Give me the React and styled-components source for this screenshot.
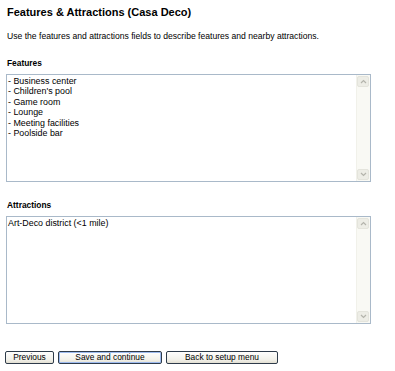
import React, { useState } from 'react';
import styled, { createGlobalStyle } from 'styled-components';

const GlobalStyle = createGlobalStyle`
  html, body {
    margin: 0;
    padding: 0;
    background: #ffffff;
  }
  body {
    font-family: "Liberation Sans", Arial, sans-serif;
    color: #000;
  }
`;

const Page = styled.div`
  width: 395px;
  height: 371px;
  box-sizing: border-box;
  padding: 5px 24px 0 6px;
  display: flex;
  flex-direction: column;
`;

const Title = styled.h1`
  margin: 0 0 0 1px;
  font-size: 11px;
  line-height: 14px;
  font-weight: 700;
`;

const Intro = styled.p`
  margin: 12px 0 0 1px;
  font-size: 8.6px;
  line-height: 11px;
`;

const Label = styled.div`
  margin: ${props => props.top}px 0 0 1px;
  font-size: 8.4px;
  line-height: 11px;
  font-weight: 700;
`;

const FieldBox = styled.div`
  margin-top: 5px;
  height: 108px;
  box-sizing: border-box;
  border: 1px solid #a9b9c9;
  display: flex;
  background: #fff;
`;

const Area = styled.textarea`
  flex: 1;
  border: none;
  outline: none;
  resize: none;
  margin: 0;
  padding: 1px 1px;
  font-family: "Liberation Sans", Arial, sans-serif;
  font-size: 8.9px;
  line-height: 10.4px;
  color: #000;
  background: transparent;
  overflow: hidden;
`;

const Scrollbar = styled.div`
  width: 12px;
  display: flex;
  flex-direction: column;
  justify-content: space-between;
  background: #f9f9f4;
  border-left: 1px solid #f1f1ea;
  padding: 1px 1px 1px 0;
`;

const ScrollButton = styled.div`
  height: 11px;
  border-radius: 2px;
  background: #ededE6;
  border: 1px solid #e4e4dc;
  box-sizing: border-box;
  display: flex;
  align-items: center;
  justify-content: center;
  svg {
    display: block;
  }
`;

const ButtonRow = styled.div`
  margin-top: 27px;
  margin-left: -1px;
  display: flex;
  gap: 4px;
`;

const Button = styled.button`
  width: ${props => props.w}px;
  height: 13px;
  margin: 0;
  padding: 0;
  box-sizing: border-box;
  border: 1px solid #2e3b4a;
  border-radius: 2px;
  background: linear-gradient(#fefefe, #f2f1ea 70%, #e2dfd2);
  font-family: "Liberation Sans", Arial, sans-serif;
  font-size: 8.4px;
  line-height: 11px;
  color: #000;
  box-shadow: ${props => (props.primary ? 'inset 0 0 0 1px #9ebbee' : 'none')};
  cursor: pointer;
`;

const Chevron = ({ up }) => (
  <svg width="7" height="5" viewBox="0 0 7 5">
    <path
      d={up ? 'M1 4 L3.5 1.5 L6 4' : 'M1 1 L3.5 3.5 L6 1'}
      fill="none"
      stroke="#b4b4ac"
      strokeWidth="1.2"
    />
  </svg>
);

const TextField = ({ value, onChange }) => (
  <FieldBox>
    <Area value={value} onChange={e => onChange(e.target.value)} />
    <Scrollbar>
      <ScrollButton><Chevron up /></ScrollButton>
      <ScrollButton><Chevron /></ScrollButton>
    </Scrollbar>
  </FieldBox>
);

const App = () => {
  const [features, setFeatures] = useState(
    '- Business center\n- Children\'s pool\n- Game room\n- Lounge\n- Meeting facilities\n- Poolside bar'
  );
  const [attractions, setAttractions] = useState('Art-Deco district (<1 mile)');

  return (
    <>
      <GlobalStyle />
      <Page>
        <Title>Features &amp; Attractions (Casa Deco)</Title>
        <Intro>Use the features and attractions fields to describe features and nearby attractions.</Intro>
        <Label top={16}>Features</Label>
        <TextField value={features} onChange={setFeatures} />
        <Label top={18}>Attractions</Label>
        <TextField value={attractions} onChange={setAttractions} />
        <ButtonRow>
          <Button w={49}>Previous</Button>
          <Button w={104} primary>Save and continue</Button>
          <Button w={112}>Back to setup menu</Button>
        </ButtonRow>
      </Page>
    </>
  );
};

export default App;
